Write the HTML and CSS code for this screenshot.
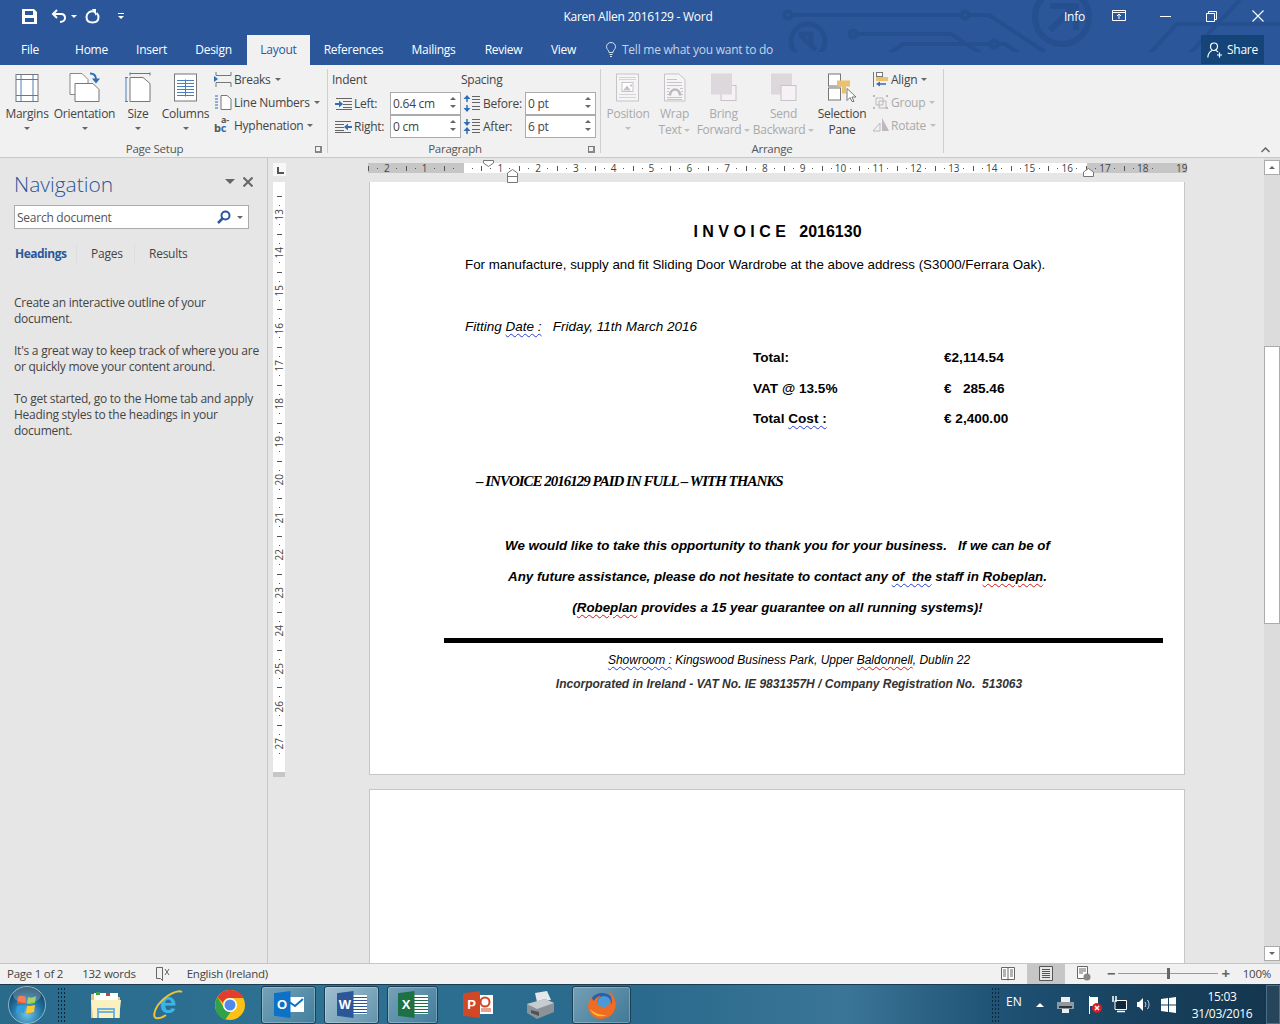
FILE: index.html
```html
<!DOCTYPE html>
<html>
	<head>
		<meta charset="utf-8">
		<title>Karen Allen 2016129 - Word</title>
		<link rel="stylesheet" href="styles.css">
	</head>
	<body>
		<div class="header">
			<svg class="circuit" width="1280" height="52" viewBox="0 0 1280 52">
				<g fill="none" stroke="#254f8e" stroke-width="4">
					<circle cx="788" cy="15" r="3.5"/>
					<path d="M792 15H961M969 15H989L1045 52"/>
					<circle cx="965" cy="15" r="3.5"/>
					<circle cx="853" cy="34" r="3.5"/>
					<path d="M857 34H951L980 53"/>
					<path d="M890 53L903 44H990M998 44H1005L1018 53"/>
					<circle cx="994" cy="44" r="3.5"/>
					<circle cx="808" cy="41" r="17" stroke-width="5"/>
					<path d="M799 34H811V46M800 35L816 50" stroke-width="5"/>
					<circle cx="1062" cy="17" r="27" stroke-width="6"/>
					<path d="M1050 6H1076V30M1074 7L1050 30" stroke-width="6"/>
					<path d="M1150 53L1177 24H1280M1190 53L1240 0"/>
				</g>
			</svg>
			<div class="titlebar">
				<div class="qat">
					<svg class="save-icon" width="15" height="15" viewBox="0 0 15 15"><path fill="#fff" d="M0 0H12L15 3V15H0ZM3 2V6H11V2ZM3 9V13H12V9Z"/></svg>
					<svg width="17" height="14" viewBox="0 0 17 14"><path fill="none" stroke="#fff" stroke-width="2" d="M2 5H10C13 5 14 7 14 9C14 11 12 13 9 13M6 1L2 5L6 9"/></svg>
					<span class="caret caret-white"></span>
					<svg class="redo-icon" width="15" height="15" viewBox="0 0 15 15"><path fill="none" stroke="#fff" stroke-width="2" d="M9 2.500C5 1.800 1.500 4 1.500 8C1.500 11.500 4 13.500 7.500 13.500C11 13.500 13.500 11.500 13.500 8C13.500 6 12.500 5 11.500 4"/><path fill="#fff" d="M7 0H11V7Z"/></svg>
					<span class="customize"><span class="customize-bar"></span><span class="caret caret-white"></span></span>
				</div>
				<div class="doc-title">Karen Allen 2016129 - Word</div>
				<div class="win-btns">
					<span class="info">Info</span>
					<svg class="win-display" width="14" height="12" viewBox="0 0 14 12"><path fill="none" stroke="#fff" d="M.5 .5H13.500V10.500H.5ZM.5 2.500H13.500M7 9V4.500M5 6L7 4L9 6"/></svg>
					<svg class="win-min" width="11" height="11" viewBox="0 0 11 11"><path stroke="#fff" d="M0 5.500H11"/></svg>
					<svg class="win-max" width="11" height="11" viewBox="0 0 11 11"><path fill="none" stroke="#fff" d="M.5 2.500H8.500V10.500H.5ZM2.500 2.500V.5H10.500V8.500H8.500"/></svg>
					<svg class="win-close" width="12" height="12" viewBox="0 0 12 12"><path stroke="#fff" stroke-width="1.100" d="M.5 .5L11.500 11.500M11.500 .5L.5 11.500"/></svg>
				</div>
			</div>
			<div class="tabs">
				<span class="tab tab-file">File</span>
				<span class="tab tab-home">Home</span>
				<span class="tab tab-insert">Insert</span>
				<span class="tab tab-design">Design</span>
				<span class="tab tab-active">Layout</span>
				<span class="tab tab-ref">References</span>
				<span class="tab tab-mail">Mailings</span>
				<span class="tab tab-review">Review</span>
				<span class="tab tab-view">View</span>
				<span class="tell">
					<svg width="10" height="15" viewBox="0 0 10 15"><path fill="none" stroke="#d5dfee" d="M3 10.500C3 8 .5 7.500 .5 4.700C.5 2.300 2.500 .5 5 .5C7.500 .5 9.500 2.300 9.500 4.700C9.500 7.500 7 8 7 10.500ZM3.500 12.500H6.500M4 14.500H6"/></svg>
					Tell me what you want to do
				</span>
				<span class="share">
					<svg width="16" height="16" viewBox="0 0 16 16"><path fill="none" stroke="#fff" stroke-width="1.200" d="M7 1C9.500 1 10.500 3 10.500 4.500C10.500 6.500 9 8.500 7 8.500C5 8.500 3.500 6.500 3.500 4.500C3.500 3 4.500 1 7 1ZM.8 15.500C1 12 3 9.500 5 8.500M9 8.500C10 9 10.500 9.500 11 10M12.500 10.500V15.500M10 13H15"/></svg>
					Share
				</span>
			</div>
		</div>

		<div class="ribbon">
			<div class="group group-setup">
				<div class="group-body">
					<div class="big-btn btn-margins">
						<svg width="32" height="32" viewBox="0 0 32 32"><rect x="5" y="2" width="22" height="27" fill="#fff" stroke="#777"/><path fill="none" stroke="#4a7ebb" d="M5 7H27M5 23H27M10 2V29M22 2V29"/></svg>
						<span class="big-label">Margins</span>
						<span class="caret"></span>
					</div>
					<div class="big-btn btn-orient">
						<svg width="32" height="32" viewBox="0 0 32 32"><path fill="#fff" stroke="#888" d="M1 1H13L19 7V22H1Z"/><path fill="#fff" stroke="#777" d="M6 11H24L30 17V29H6Z"/><path fill="none" stroke="#2f6db5" stroke-width="2" d="M21 1C25 1 27 3 27 7"/><path fill="#2f6db5" d="M23 6H31L27 11Z"/></svg>
						<span class="big-label">Orientation</span>
						<span class="caret"></span>
					</div>
					<div class="big-btn btn-size">
						<svg width="26" height="32" viewBox="0 0 26 32"><path fill="none" stroke="#4a7ebb" d="M5 1H25M5 0V3M25 0V3M1 5V29M0 5H3M0 29H3"/><path fill="#fff" stroke="#777" d="M5 5H18L25 11V29H5Z"/></svg>
						<span class="big-label">Size</span>
						<span class="caret"></span>
					</div>
					<div class="big-btn btn-columns">
						<svg width="24" height="30" viewBox="0 0 24 30"><rect x=".5" y=".5" width="22" height="27" fill="#fff" stroke="#777"/><path stroke="#4a7ebb" d="M3 7H20M3 10H20M3 13H20M3 16H20M3 19H20M3 22H20M11.500 6V23" /></svg>
						<span class="big-label">Columns</span>
						<span class="caret"></span>
					</div>
					<div class="small-col small-setup">
						<div class="small-row">
							<svg width="18" height="15" viewBox="0 0 18 15"><path fill="none" stroke="#777" d="M2 0V3.500H17V0M2 15V10.500H17V15"/><path fill="#2f6db5" d="M0 4L4 7L0 10Z"/></svg>
							<span>Breaks</span><span class="caret"></span>
						</div>
						<div class="small-row">
							<svg width="18" height="15" viewBox="0 0 18 15"><path fill="#fff" stroke="#777" d="M7 .5H13L17 4V14.500H7Z"/><path stroke="#2f6db5" d="M1 1H4M1 4H4M1 7H4M1 10H4M1 13H4"/></svg>
							<span>Line Numbers</span><span class="caret"></span>
						</div>
						<div class="small-row">
							<span class="hyph-icon">b<span class="hyph-blue">c</span><span class="hyph-top">a-</span></span>
							<span>Hyphenation</span><span class="caret"></span>
						</div>
					</div>
				</div>
				<div class="group-label">Page Setup</div>
				<span class="launcher"></span>
			</div>

			<div class="group group-para">
				<div class="group-body para-body">
					<div class="para-col para-indent">
						<div class="para-head">Indent</div>
						<div class="para-row">
							<svg width="17" height="12" viewBox="0 0 17 12"><path stroke="#666" d="M1 .5H17M8 3.500H17M8 6.500H17M8 9.500H17M1 11.500H17"/><path stroke="#2f6db5" stroke-width="2" d="M0 6H4"/><path fill="#2f6db5" d="M4 2.500L8 6L4 9.500Z"/></svg>
							<span class="para-label label-indent">Left:</span>
							<span class="spin">0.64 cm<span class="spin-arrows"><i class="up"></i><i class="down"></i></span></span>
						</div>
						<div class="para-row">
							<svg width="17" height="12" viewBox="0 0 17 12"><path stroke="#666" d="M0 .5H16M0 3.500H9M0 6.500H9M0 9.500H9M0 11.500H16"/><path stroke="#2f6db5" stroke-width="2" d="M13 6H17"/><path fill="#2f6db5" d="M13 2.500L9 6L13 9.500Z"/></svg>
							<span class="para-label label-indent">Right:</span>
							<span class="spin">0 cm<span class="spin-arrows"><i class="up"></i><i class="down"></i></span></span>
						</div>
					</div>
					<div class="para-col para-spacing">
						<div class="para-head">Spacing</div>
						<div class="para-row">
							<svg width="17" height="17" viewBox="0 0 17 17"><path stroke="#666" d="M9 1.500H17M9 4.500H17M9 7.500H17M9 11.500H17M9 14.500H17"/><path stroke="#2f6db5" stroke-width="1.500" d="M4 2V7M4 10V15"/><path fill="#2f6db5" d="M4 0L7.500 4H.5ZM4 17L7.500 13H.5Z"/></svg>
							<span class="para-label label-spacing">Before:</span>
							<span class="spin">0 pt<span class="spin-arrows"><i class="up"></i><i class="down"></i></span></span>
						</div>
						<div class="para-row">
							<svg width="17" height="17" viewBox="0 0 17 17"><path stroke="#666" d="M9 1.500H17M9 4.500H17M9 7.500H17M9 11.500H17M9 14.500H17"/><path stroke="#2f6db5" stroke-width="1.500" d="M4 1V5M4 12V16"/><path fill="#2f6db5" d="M4 8L7.500 4H.5ZM4 9L7.500 13H.5Z"/></svg>
							<span class="para-label label-spacing">After:</span>
							<span class="spin">6 pt<span class="spin-arrows"><i class="up"></i><i class="down"></i></span></span>
						</div>
					</div>
				</div>
				<div class="group-label">Paragraph</div>
				<span class="launcher"></span>
			</div>

			<div class="group group-arrange">
				<div class="group-body">
					<div class="big-btn off btn-position">
						<svg width="24" height="30" viewBox="0 0 24 30"><rect x=".5" y=".5" width="22" height="27" fill="#f5f5f5" stroke="#c8c3c8"/><path stroke="#d6d2d6" d="M3 4H20M3 6H20M3 21H20M3 24H20"/><rect x="6" y="9" width="11" height="9" fill="#fff" stroke="#c8c3c8"/><path fill="#c8c3c8" d="M7 17L11 12L15 17ZM14 11H16V13H14Z"/></svg>
						<span class="big-label">Position</span>
						<span class="caret"></span>
					</div>
					<div class="big-btn off btn-wrap">
						<svg width="22" height="30" viewBox="0 0 22 30"><path fill="#f5f5f5" stroke="#c8c3c8" d="M.5 .5H15L21 6V27.500H.5Z"/><path stroke="#c8c3c8" d="M3 6H13M3 9H18M3 12H18M3 24H18M3 26H18M3 15H6M16 15H19M3 18H5M17 18H19M3 21H5M17 21H19"/><path fill="none" stroke="#bdb8bd" stroke-width="2.500" d="M6 22C6 14 16 14 16 22"/></svg>
						<span class="big-label">Wrap<br>Text <span class="caret"></span></span>
					</div>
					<div class="big-btn off btn-bring">
						<svg width="28" height="30" viewBox="0 0 28 30"><rect x="11" y="12" width="15" height="15" fill="#f5f1f5" stroke="#c8c3c8"/><rect x="1" y="0" width="21" height="21" fill="#dcd8dc"/></svg>
						<span class="big-label">Bring<br>Forward <span class="caret"></span></span>
					</div>
					<div class="big-btn off btn-send">
						<svg width="28" height="30" viewBox="0 0 28 30"><rect x="1" y="0" width="21" height="21" fill="#dcd8dc"/><rect x="11" y="12" width="15" height="15" fill="#f5f1f5" stroke="#c8c3c8"/></svg>
						<span class="big-label">Send<br>Backward <span class="caret"></span></span>
					</div>
					<div class="big-btn btn-selection">
						<svg width="28" height="32" viewBox="0 0 28 32"><rect x=".5" y="1.500" width="12" height="12" fill="#fff" stroke="#777"/><rect x=".5" y="15.500" width="12" height="12" fill="#fff" stroke="#777"/><path fill="#eac16f" d="M9 8H22V14H18V21H14V14H9Z"/><path fill="#fff" stroke="#777" d="M19 16V28L22 25L24 29H26L24 24.500H28Z"/></svg>
						<span class="big-label">Selection<br>Pane</span>
					</div>
					<div class="small-col small-arrange">
						<div class="small-row">
							<svg width="16" height="15" viewBox="0 0 16 15"><path stroke="#777" d="M.5 0V15"/><rect x="3.500" y=".5" width="6" height="4" fill="#fff" stroke="#777"/><rect x="3" y="5" width="12" height="4" fill="#eac16f"/><path stroke="#2f6db5" stroke-width="1.500" d="M6 12H13"/><path fill="#2f6db5" d="M3 12L7 9.500V14.500Z"/></svg>
							<span>Align</span><span class="caret"></span>
						</div>
						<div class="small-row off">
							<svg width="16" height="15" viewBox="0 0 16 15"><path fill="none" stroke="#bcb8bc" d="M3 3H10V10H3ZM6 6H13V13H6Z"/><path fill="#bcb8bc" d="M0 0H2V2H0ZM13 0H15V2H13ZM0 12H2V14H0ZM13 12H15V14H13Z"/></svg>
							<span>Group</span><span class="caret"></span>
						</div>
						<div class="small-row off">
							<svg width="16" height="15" viewBox="0 0 16 15"><path fill="none" stroke="#bcb8bc" d="M0 13H7V5Z"/><path fill="#bcb8bc" d="M9 0L16 13H9Z"/></svg>
							<span>Rotate</span><span class="caret"></span>
						</div>
					</div>
				</div>
				<div class="group-label">Arrange</div>
			</div>
			<svg class="collapse" width="9" height="6" viewBox="0 0 9 6"><path fill="none" stroke="#666" stroke-width="1.500" d="M.5 5L4.500 1L8.500 5"/></svg>
		</div>

		<div class="main">
			<div class="nav">
				<div class="nav-head">
					<span class="nav-title">Navigation</span>
					<span class="caret caret-big"></span>
					<svg class="nav-close" width="10" height="10" viewBox="0 0 10 10"><path stroke="#666" stroke-width="2" d="M.5 .5L9.500 9.500M9.500 .5L.5 9.500"/></svg>
				</div>
				<div class="nav-search">
					<span class="nav-search-text">Search document</span>
					<svg width="14" height="14" viewBox="0 0 14 14"><circle cx="8.500" cy="5.500" r="4" fill="none" stroke="#2b579a" stroke-width="2"/><path stroke="#2b579a" stroke-width="2.500" d="M5.500 8.500L1 13"/></svg>
					<span class="caret"></span>
				</div>
				<div class="nav-tabs">
					<span class="nav-tab nav-tab-on">Headings</span>
					<span class="nav-tab nav-tab-pages">Pages</span>
					<span class="nav-tab nav-tab-results">Results</span>
				</div>
				<p class="nav-text">Create an interactive outline of your document.</p>
				<p class="nav-text">It's a great way to keep track of where you are or quickly move your content around.</p>
				<p class="nav-text">To get started, go to the Home tab and apply Heading styles to the headings in your document.</p>
			</div>

			<div class="work">
				<div class="ruler-top">
					<span class="ruler-corner"><span class="ruler-l"></span></span>
					<div class="h-ruler">
						<span class="cm">2</span><span class="cm">1</span><span class="cm"></span><span class="cm">1</span><span class="cm">2</span><span class="cm">3</span><span class="cm">4</span><span class="cm">5</span><span class="cm">6</span><span class="cm">7</span><span class="cm">8</span><span class="cm">9</span><span class="cm">10</span><span class="cm">11</span><span class="cm">12</span><span class="cm">13</span><span class="cm">14</span><span class="cm">15</span><span class="cm">16</span><span class="cm">17</span><span class="cm">18</span><span class="cm cm-last">19</span>
						<svg class="marker marker-first" width="11" height="7" viewBox="0 0 11 7"><path fill="#fff" stroke="#777" d="M.5 .5H10.500V3L5.500 6.500L.5 3Z"/></svg>
						<svg class="marker marker-left" width="11" height="14" viewBox="0 0 11 14"><path fill="#fff" stroke="#777" d="M.5 13.500V4L5.500 .5L10.500 4V13.500ZM.5 7.500H10.500"/></svg>
						<svg class="marker marker-right" width="11" height="9" viewBox="0 0 11 9"><path fill="#fff" stroke="#777" d="M.5 8.500V4L5.500 .5L10.500 4V8.500Z"/></svg>
					</div>
				</div>
				<div class="work-body">
					<div class="v-ruler">
						<span class="v-start"></span>
						<span class="vcm"><b>13</b></span><span class="vcm"><b>14</b></span><span class="vcm"><b>15</b></span><span class="vcm"><b>16</b></span><span class="vcm"><b>17</b></span><span class="vcm"><b>18</b></span><span class="vcm"><b>19</b></span><span class="vcm"><b>20</b></span><span class="vcm"><b>21</b></span><span class="vcm"><b>22</b></span><span class="vcm"><b>23</b></span><span class="vcm"><b>24</b></span><span class="vcm"><b>25</b></span><span class="vcm"><b>26</b></span><span class="vcm"><b>27</b></span>
						<span class="v-end"></span>
						<span class="v-grey"></span>
					</div>
					<div class="pages">
						<div class="page page-one">
							<div class="line center invoice">I N V O I C E   2016130</div>
							<div class="line for-line">For manufacture, supply and fit Sliding Door Wardrobe at the above address (S3000/Ferrara Oak).</div>
							<div class="line fitting">Fitting <span class="sq-blue">Date :</span>   Friday, 11th March 2016</div>
							<div class="totals">
								<span>Total:</span><span>€2,114.54</span>
								<span>VAT @ 13.5%</span><span>€   285.46</span>
								<span>Total <span class="sq-blue">Cost :</span></span><span>€ 2,400.00</span>
							</div>
							<div class="line paid">– INVOICE 2016129 PAID IN FULL – WITH THANKS</div>
							<div class="thanks">
								<div class="line center">We would like to take this opportunity to thank you for your business.   If we can be of</div>
								<div class="line center">Any future assistance, please do not hesitate to contact any <span class="sq-blue">of  the</span> staff in <span class="sq-red">Robeplan</span>.</div>
								<div class="line center">(<span class="sq-red">Robeplan</span> provides a 15 year guarantee on all running systems)!</div>
							</div>
							<div class="rule"></div>
							<div class="foot foot-one"><span class="sq-blue">Showroom :</span> Kingswood Business Park, Upper <span class="sq-red">Baldonnell</span>, Dublin 22</div>
							<div class="foot foot-two">Incorporated in Ireland - VAT No. IE 9831357H / Company Registration No.  513063</div>
						</div>
						<div class="page page-two"></div>
					</div>
					<div class="scrollbar">
						<span class="scroll-btn"><i class="up"></i></span>
						<span class="scroll-gap-top"></span>
						<span class="scroll-thumb"></span>
						<span class="scroll-gap-bottom"></span>
						<span class="scroll-btn"><i class="down"></i></span>
					</div>
				</div>
			</div>
		</div>

		<div class="status">
			<span class="st-page">Page 1 of 2</span>
			<span class="st-words">132 words</span>
			<svg class="st-proof" width="14" height="15" viewBox="0 0 14 15"><path fill="none" stroke="#666" d="M6.500 1.500H.5V12.500H4.500L6.500 14.500ZM6.500 1.500V14.500"/><path stroke="#666" d="M9 3L13 9M13 3L9 9"/></svg>
			<span class="st-lang">English (Ireland)</span>
			<div class="st-right">
				<svg class="st-view" width="14" height="15" viewBox="0 0 14 15"><path fill="#fff" stroke="#666" d="M.5 1.500H13.500V13.500H.5ZM7 1.500V14.500"/><path stroke="#666" d="M2 4H5M2 6H5M2 8H5M2 10H5M9 4H12M9 6H12M9 8H12M9 10H12"/></svg>
				<span class="st-view-on"><svg width="14" height="15" viewBox="0 0 14 15"><path fill="#e6e6e6" stroke="#555" d="M.5 .5H13.500V14.500H.5Z"/><path stroke="#555" d="M3 3.500H11M3 5.500H11M3 7.500H11M3 9.500H11M3 11.500H11"/></svg></span>
				<svg class="st-web" width="14" height="15" viewBox="0 0 14 15"><path fill="#fff" stroke="#666" d="M.5 .5H10.500V12.500H.5Z"/><path stroke="#666" d="M2 3H9M2 5H9M2 7H6"/><circle cx="10" cy="11" r="3.500" fill="#888"/></svg>
				<span class="zoom">
					<span class="zoom-sign">−</span>
					<span class="zoom-track"><span class="zoom-thumb"></span></span>
					<span class="zoom-sign">+</span>
				</span>
				<span class="st-pct">100%</span>
			</div>
		</div>

		<div class="taskbar">
			<span class="orb-cell">
				<svg width="38" height="38" viewBox="0 0 38 38">
					<defs>
						<radialGradient id="orbFill" cx="50%" cy="75%" r="70%">
							<stop offset="0" stop-color="#6fc3e6"/>
							<stop offset=".6" stop-color="#1f6f9f"/>
							<stop offset="1" stop-color="#12405f"/>
						</radialGradient>
					</defs>
					<circle cx="19" cy="19" r="18.500" fill="url(#orbFill)" stroke="#bcd4e2" stroke-opacity=".7"/>
					<path fill="#f0592b" d="M10 11C13 9 15 10 18 11L17 18C15 17 12 17 9 18Z"/>
					<path fill="#8cc63f" d="M20 11C22 12 25 12 28 10L27 17C24 18 21 18 19 18Z"/>
					<path fill="#2f9fe0" d="M9 20C12 19 14 19 17 20L16 27C14 26 11 26 8 27Z"/>
					<path fill="#fdc82f" d="M19 20C21 20 24 20 27 19L26 26C23 27 20 27 18 27Z"/>
					<ellipse cx="19" cy="9" rx="14" ry="8" fill="#fff" opacity=".22"/>
				</svg>
			</span>
			<span class="grip"></span>
			<span class="task task-first">
				<svg width="32" height="30" viewBox="0 0 32 30"><path fill="#e8c66e" d="M1 4H13L16 7H30V28H1Z"/><path fill="#fff" d="M4 3H28V10H4Z"/><path fill="#3ea33a" d="M6 2H10V5H6Z"/><path fill="#d04030" d="M16 3H20V6H16Z"/><path fill="#fdf0c0" d="M1 10H31L29 28H3Z"/><path fill="none" stroke="#6fb4dc" stroke-width="2" d="M8 28V19H24V28M8 22H24"/></svg>
			</span>
			<span class="task">
				<svg width="32" height="32" viewBox="0 0 32 32"><text x="16" y="24" text-anchor="middle" class="ie-e">e</text><path fill="none" stroke="#f0c22e" stroke-width="2" d="M30 3C26 0 14 6 6 16C2 22 1 28 4 29C7 30 11 28 14 26"/></svg>
			</span>
			<span class="task">
				<svg width="30" height="30" viewBox="0 0 30 30"><circle cx="15" cy="15" r="15" fill="#fbc116"/><path fill="#e23d2e" d="M2.500 7A15 15 0 0 1 28.500 8H15C11 8 9 10 8 13Z"/><path fill="#2fa24a" d="M2.500 7L9 18C10.500 21 13 22 16 21.500L10 30C2 27 -3 16 2.500 7Z"/><circle cx="15" cy="15" r="7" fill="#fff"/><circle cx="15" cy="15" r="5.500" fill="#4f89ee"/></svg>
			</span>
			<span class="task task-on">
				<span class="app-icon">
					<svg class="app-back" width="20" height="19" viewBox="0 0 20 19"><rect width="20" height="15" y="2" fill="#fff"/><path fill="none" stroke="#0d72c6" stroke-width="2" d="M1 4L11 11L19 4"/></svg>
					<span class="app-tile outlook">O</span>
				</span>
			</span>
			<span class="task task-on task-active">
				<span class="app-icon">
					<span class="app-back word-back"></span>
					<span class="app-tile word">W</span>
				</span>
			</span>
			<span class="task task-on task-xl">
				<span class="app-icon">
					<span class="app-back excel-back"></span>
					<span class="app-tile excel">X</span>
				</span>
			</span>
			<span class="task task-ppt">
				<span class="app-icon">
					<svg class="app-back" width="20" height="19" viewBox="0 0 20 19"><rect width="20" height="19" fill="#fff"/><circle cx="12" cy="7" r="4.500" fill="none" stroke="#d24726" stroke-width="2"/><path stroke="#d24726" d="M8 14H18M8 16H18"/></svg>
					<span class="app-tile ppt">P</span>
				</span>
			</span>
			<span class="task task-fax">
				<svg width="30" height="30" viewBox="0 0 30 30"><path fill="#e5e8ea" d="M10 3L22 1L26 10L12 12Z"/><path fill="#8b9398" d="M2 14L20 9L29 13V22L12 29L2 23Z"/><path fill="#c6ccd0" d="M2 14L20 9L29 13L12 19Z"/><path fill="#4d5459" d="M6 20L14 22V26L6 23Z"/></svg>
			</span>
			<span class="task task-on task-fox">
				<svg width="30" height="30" viewBox="0 0 30 30"><circle cx="15" cy="16" r="13" fill="#2a5ea8"/><circle cx="17" cy="13" r="7" fill="#4a9ad8"/><path fill="#ef6c24" d="M22 1C27 5 30 12 28 19C26 26 20 29 14 29C7 29 2 24 1 17C1 13 3 9 5 7C5 9 6 10 7 11C8 8 11 6 14 6C11 8 10 10 10 13C11 16 14 17 17 17C21 17 23 14 22 11C24 12 25 14 25 15C25 10 24 5 22 1Z"/><path fill="#fbc02d" d="M3 19C6 26 14 28 20 25C14 25 8 24 3 19Z"/></svg>
			</span>
			<div class="tray">
				<span class="grip"></span>
				<span class="tray-lang">EN</span>
				<span class="tray-up"></span>
				<svg class="tray-print" width="17" height="16" viewBox="0 0 17 16"><path fill="#eee" d="M4 0H13V5H4ZM5 12H12V16H5Z"/><path fill="#8d9aa3" d="M0 5H17V12H0Z"/><path fill="#333" d="M2 9H15V11H2Z"/></svg>
				<svg class="tray-flag" width="14" height="18" viewBox="0 0 14 18"><path stroke="#fff" d="M1.500 0V18"/><path fill="#fff" d="M2 1H10V10H2Z"/><circle cx="9" cy="12" r="5" fill="#d81e1e"/><path stroke="#fff" stroke-width="1.500" d="M7 10L11 14M11 10L7 14"/></svg>
				<svg class="tray-net" width="15" height="17" viewBox="0 0 15 17"><path fill="#10283a" stroke="#fff" d="M3 4.500H14.500V13.500H3Z"/><path stroke="#fff" stroke-width="1.500" d="M1 0V6M4 0V6M5 15.500H13"/></svg>
				<svg class="tray-vol" width="14" height="15" viewBox="0 0 14 15"><path fill="#fff" d="M0 5H2L6 1V14L2 10H0Z"/><path fill="none" stroke="#cde" d="M8 5C9 6.500 9 8.500 8 10M10.500 3C12.500 6 12.500 9 10.500 12"/></svg>
				<svg class="tray-win" width="15" height="16" viewBox="0 0 15 16"><path fill="#fff" d="M0 2L7 1V7.500H0ZM8 1L15 0V7.500H8ZM0 8.500H7V15L0 14ZM8 8.500H15V16L8 15Z"/></svg>
				<span class="clock">15:03<br>31/03/2016</span>
				<span class="show-desktop"></span>
			</div>
		</div>
	</body>
</html>
```

FILE: styles.css
```css
*{
	box-sizing: border-box;
}
html,body{
	margin: 0;
	height: 100%;
}
body{
	width: 1280px;
	height: 1024px;
	overflow: hidden;
	display: flex;
	flex-direction: column;
	font-family: "Open Sans", sans-serif;
	font-size: 12px;
	letter-spacing: -0.25px;
	color: #444;
	background: #e6e6e6;
}
svg{
	display: block;
	flex: none;
}
.caret{
	display: inline-block;
	width: 0;
	height: 0;
	border-top: 3px solid #666;
	border-left: 3px solid transparent;
	border-right: 3px solid transparent;
	vertical-align: middle;
}
.caret-white{
	border-top-color: #fff;
}

/* title bar + tabs */
.header{
	position: relative;
	height: 65px;
	background: #2b579a;
	color: #fff;
	flex: none;
}
.circuit{
	position: absolute;
	left: 0;
	top: 0;
}
.titlebar{
	position: relative;
	height: 35px;
	padding-bottom: 3px;
	display: flex;
	align-items: center;
}
.qat{
	width: 400px;
	padding-left: 22px;
	display: flex;
	align-items: center;
}
.qat svg{
	margin-right: 3px;
}
.qat .save-icon{
	margin-right: 14px;
}
.qat .redo-icon{
	margin-left: 8px;
}
.customize{
	margin-left: 15px;
	display: flex;
	flex-direction: column;
	align-items: center;
	gap: 2px;
}
.customize-bar{
	width: 6px;
	height: 1px;
	background: #fff;
}
.doc-title{
	width: 476px;
	text-align: center;
}
.win-btns{
	flex: 1;
	display: flex;
	align-items: center;
}
.info{
	margin-left: 188px;
}
.win-display{
	margin-left: 27px;
}
.win-min{
	margin-left: 34px;
}
.win-max{
	margin-left: 35px;
}
.win-close{
	margin-left: 35px;
}
.tabs{
	position: relative;
	height: 30px;
	display: flex;
	align-items: stretch;
}
.tab{
	display: flex;
	align-items: center;
	justify-content: center;
	color: #fff;
	padding-bottom: 1px;
}
.tab-file{
	width: 60px;
}
.tab-home{
	width: 63px;
}
.tab-insert{
	width: 57px;
}
.tab-design{
	width: 67px;
}
.tab-active{
	width: 63px;
	background: #f1f1f1;
	color: #2b579a;
}
.tab-ref{
	width: 87px;
}
.tab-mail{
	width: 73px;
}
.tab-review{
	width: 67px;
}
.tab-view{
	width: 53px;
}
.tell{
	margin-left: 16px;
	padding-bottom: 1px;
	display: flex;
	align-items: center;
	gap: 6px;
	color: #c6d3e8;
}
.share{
	margin-left: auto;
	margin-right: 16px;
	margin-bottom: 1px;
	width: 63px;
	background: #154479;
	display: flex;
	align-items: center;
	justify-content: center;
	gap: 4px;
}

/* ribbon */
.ribbon{
	position: relative;
	height: 93px;
	flex: none;
	background: #f1f1f1;
	border-bottom: 1px solid #c8c8c8;
	display: flex;
	padding-top: 4px;
}
.group{
	position: relative;
	height: 84px;
	flex: none;
	border-right: 1px solid #cfcfcf;
	display: flex;
	flex-direction: column;
}
.group-setup{
	width: 328px;
}
.group-para{
	width: 273px;
}
.group-arrange{
	width: 343px;
}
.group-setup .group-label,.group-para .group-label{
	padding-right: 18px;
}
.group-body{
	height: 75px;
	flex: none;
	display: flex;
}
.group-label{
	height: 9px;
	line-height: 9px;
	text-align: center;
	font-size: 11.500px;
	color: #555;
}
.launcher{
	position: absolute;
	right: 5px;
	bottom: 0;
	width: 7px;
	height: 7px;
	border-left: 1px solid #777;
	border-top: 1px solid #777;
	border-bottom: 2px solid #888;
	border-right: 2px solid #888;
}
.big-btn{
	flex: none;
	display: flex;
	flex-direction: column;
	align-items: center;
	text-align: center;
	color: #444;
}
.big-btn svg{
	height: 33px;
	margin-top: 3px;
}
.big-label{
	display: block;
	margin-top: 1px;
	line-height: 16px;
	white-space: nowrap;
}
.big-btn > .caret{
	margin-top: 5px;
}
.big-label .caret{
	border-top-color: #bbb;
}
.off,.off .big-label{
	color: #a9a9a9;
}
.off > .caret,.off .caret{
	border-top-color: #c0c0c0;
}
.btn-margins{
	width: 54px;
}
.btn-orient{
	width: 61px;
}
.btn-size{
	width: 46px;
}
.btn-columns{
	width: 49px;
}
.small-col{
	flex: none;
	display: flex;
	flex-direction: column;
}
.small-setup{
	margin-left: 4px;
}
.small-row{
	height: 23px;
	padding-bottom: 2px;
	display: flex;
	align-items: center;
	gap: 2px;
	white-space: nowrap;
}
.small-row .caret{
	margin-left: 2px;
}
.hyph-icon{
	position: relative;
	width: 18px;
	font-weight: 700;
	font-size: 11px;
	line-height: 14px;
	padding-top: 4px;
	color: #555;
}
.hyph-blue{
	color: #2f6db5;
}
.hyph-top{
	position: absolute;
	left: 7px;
	top: -4px;
	font-size: 9px;
}

/* paragraph group */
.para-indent{
	width: 133px;
	padding-left: 4px;
}
.para-spacing{
	width: 136px;
}
.para-head{
	height: 23px;
	line-height: 21px;
}
.para-row{
	height: 23px;
	display: flex;
	align-items: center;
}
.para-indent svg{
	margin-left: 3px;
}
.para-spacing svg{
	margin-left: 2px;
}
.para-label{
	white-space: nowrap;
}
.label-indent{
	width: 38px;
	padding-left: 2px;
}
.label-spacing{
	width: 45px;
	padding-left: 3px;
}
.spin{
	position: relative;
	width: 71px;
	height: 23px;
	line-height: 21px;
	padding-left: 2px;
	background: #fff;
	border: 1px solid #ababab;
	color: #444;
}
.spin-arrows{
	position: absolute;
	right: 4px;
	top: 4px;
	display: flex;
	flex-direction: column;
	gap: 5px;
}
.up,.down{
	display: block;
	width: 0;
	height: 0;
	border-left: 3px solid transparent;
	border-right: 3px solid transparent;
}
.up{
	border-bottom: 3px solid #666;
}
.down{
	border-top: 3px solid #666;
}
.btn-position{
	width: 50px;
	margin-left: 2px;
}
.btn-wrap{
	width: 43px;
}
.btn-bring{
	width: 55px;
}
.btn-send{
	width: 65px;
}
.btn-selection{
	width: 52px;
}
.small-arrange{
	margin-left: 5px;
}
.collapse{
	position: absolute;
	right: 10px;
	bottom: 4px;
}

/* main area */
.main{
	height: 805px;
	flex: none;
	display: flex;
}
.nav{
	width: 268px;
	flex: none;
	border-right: 1px solid #c6c6c6;
	background: #e6e6e6;
	padding: 0 14px;
}
.nav-head{
	height: 47px;
	display: flex;
	align-items: center;
}
.nav-title{
	width: 214px;
	font-size: 21px;
	font-weight: 300;
	letter-spacing: 0;
	color: #2b579a;
	padding-top: 4px;
}
.caret-big{
	border-top-width: 5px;
	border-left-width: 5px;
	border-right-width: 5px;
}
.nav-close{
	margin-left: 8px;
}
.nav-search{
	width: 235px;
	height: 24px;
	background: #fff;
	border: 1px solid #ababab;
	display: flex;
	align-items: center;
	padding: 0 5px 0 2px;
	color: #555;
}
.nav-search-text{
	flex: 1;
}
.nav-search .caret{
	margin-left: 6px;
}
.nav-tabs{
	height: 22px;
	margin-top: 14px;
	display: flex;
	align-items: center;
}
.nav-tab{
	height: 20px;
	line-height: 20px;
}
.nav-tab-on{
	width: 63px;
	padding-left: 1px;
	font-weight: 700;
	color: #2b579a;
	letter-spacing: -0.5px;
	border-right: 1px solid #dedede;
}
.nav-tab-pages{
	width: 58px;
	padding-left: 14px;
	border-right: 1px solid #dedede;
}
.nav-tab-results{
	padding-left: 14px;
}
.nav-text{
	margin: 0 0 16px;
	width: 252px;
	line-height: 16px;
	color: #444;
}
.nav-tabs + .nav-text{
	margin-top: 30px;
}
.work{
	flex: 1;
	display: flex;
	flex-direction: column;
	min-width: 0;
}
.ruler-top{
	height: 24px;
	flex: none;
	display: flex;
	padding-top: 5px;
}
.ruler-corner{
	width: 100px;
	padding-left: 5px;
}
.ruler-l{
	display: block;
	width: 13px;
	height: 13px;
	background: #f7f7f7;
	position: relative;
}
.ruler-l:after{
	content: "";
	position: absolute;
	left: 4px;
	top: 4px;
	width: 5px;
	height: 5px;
	border-left: 2px solid #555;
	border-bottom: 2px solid #555;
}
.h-ruler{
	position: relative;
	width: 819px;
	height: 10px;
	display: flex;
	background: linear-gradient(90deg,#c6c6c6 96px,#fff 96px,#fff 719px,#c6c6c6 719px);
}
.cm{
	width: 37.800px;
	flex: none;
	text-align: center;
	font-size: 10px;
	line-height: 10px;
	letter-spacing: 0;
	color: #444;
	background:
		linear-gradient(#555,#555) 0 50%/1px 5px no-repeat,
		linear-gradient(#555,#555) 9px 50%/1px 1px no-repeat,
		linear-gradient(#555,#555) 28px 50%/1px 1px no-repeat;
}
.cm-last{
	width: 20px;
	background: none;
	margin-left: 10px;
}
.marker{
	position: absolute;
}
.marker-first{
	left: 115px;
	top: -3px;
}
.marker-left{
	left: 139px;
	top: 6px;
}
.marker-right{
	left: 715px;
	top: 5px;
}
.work-body{
	flex: 1;
	min-height: 0;
	display: flex;
}
.v-ruler{
	width: 12px;
	margin-left: 5px;
	height: 595px;
	flex: none;
	background: #fff;
	display: flex;
	flex-direction: column;
}
.v-start{
	height: 14px;
	flex: none;
}
.vcm{
	height: 37.800px;
	flex: none;
	display: flex;
	align-items: center;
	justify-content: center;
	background:
		linear-gradient(#555,#555) 50% 0/5px 1px no-repeat,
		linear-gradient(#555,#555) 50% 9px/1px 1px no-repeat,
		linear-gradient(#555,#555) 50% 28px/1px 1px no-repeat;
}
.vcm b{
	font-weight: 400;
	font-size: 10px;
	line-height: 12px;
	letter-spacing: 0;
	color: #444;
	writing-mode: vertical-rl;
	transform: rotate(180deg);
}
.v-end{
	flex: 1;
}
.v-grey{
	height: 5px;
	flex: none;
	background: #c6c6c6;
}
.pages{
	width: 816px;
	margin-left: 84px;
	flex: none;
	overflow: hidden;
}
.page{
	background: #fff;
	border: 1px solid #c6c6c6;
	color: #000;
	font-family: "Liberation Sans", Arial, sans-serif;
	font-size: 13.330px;
	letter-spacing: 0;
}
.page-one{
	display: flow-root;
	height: 593px;
	border-top: none;
	padding-left: 95px;
	margin-bottom: 14px;
}
.page-two{
	height: 300px;
}
.line{
	height: 31px;
	line-height: 31px;
	white-space: pre;
}
.center{
	width: 625px;
	text-align: center;
}
.invoice{
	margin-top: 34px;
	font-weight: 700;
	font-size: 16px;
}
.for-line{
	margin-top: 2px;
}
.fitting{
	margin-top: 31px;
	font-style: italic;
	font-size: 13.500px;
}
.totals{
	margin-top: 1px;
	margin-left: 288px;
	display: grid;
	grid-template-columns: 191px auto;
	grid-auto-rows: 30.700px;
	line-height: 30.700px;
	font-weight: 700;
	font-size: 13.600px;
	white-space: pre;
}
.paid{
	margin-top: 31px;
	padding-left: 11px;
	font-family: "Liberation Serif", serif;
	font-size: 15px;
	font-weight: 700;
	font-style: italic;
	letter-spacing: -1px;
}
.thanks{
	margin-top: 33px;
	font-weight: 700;
	font-style: italic;
}
.sq-blue{
	text-decoration: underline wavy #2a3fd0 1px;
	text-underline-offset: 2px;
}
.sq-red{
	text-decoration: underline wavy #d01818 1px;
	text-underline-offset: 2px;
}
.rule{
	width: 719px;
	height: 5px;
	margin: 15px 0 0 -21px;
	background: #000;
}
.foot{
	width: 690px;
	margin-left: -21px;
	height: 24px;
	line-height: 24px;
	text-align: center;
	font-size: 12px;
	font-style: italic;
	white-space: pre;
}
.foot-one{
	margin-top: 5px;
}
.foot-two{
	font-weight: 700;
	color: #333;
}
.scrollbar{
	width: 16px;
	margin-left: 79px;
	margin-top: -24px;
	flex: none;
	display: flex;
	flex-direction: column;
	background: #dcdcdc;
	height: 805px;
	padding-top: 2px;
}
.scroll-btn{
	height: 15px;
	flex: none;
	background: #fff;
	border: 1px solid #ababab;
	display: flex;
	align-items: center;
	justify-content: center;
}
.scroll-gap-top{
	height: 171px;
	flex: none;
}
.scroll-gap-bottom{
	height: 322px;
	flex: none;
}
.scroll-thumb{
	height: 278px;
	flex: none;
	background: #fff;
	border: 1px solid #ababab;
}

/* status bar */
.status{
	height: 21px;
	flex: none;
	background: #f1f1f1;
	border-top: 1px solid #c6c6c6;
	display: flex;
	align-items: center;
	font-size: 11.500px;
	color: #444;
	padding: 0 0 2px 7px;
}
.st-words{
	margin-left: 19px;
}
.st-proof{
	margin-left: 20px;
}
.st-lang{
	margin-left: 17px;
}
.st-right{
	margin-left: auto;
	height: 100%;
	display: flex;
	align-items: center;
}
.st-view-on{
	width: 38px;
	height: 21px;
	margin-left: 12px;
	background: #c6c6c6;
	display: flex;
	align-items: center;
	justify-content: center;
}
.st-web{
	margin-left: 12px;
}
.zoom{
	margin-left: 16px;
	display: flex;
	align-items: center;
	gap: 3px;
}
.zoom-sign{
	font-size: 15px;
	font-weight: 700;
	color: #666;
	line-height: 14px;
}
.zoom-track{
	position: relative;
	width: 100px;
	height: 1px;
	background: #999;
}
.zoom-thumb{
	position: absolute;
	left: 49px;
	top: -5px;
	width: 3px;
	height: 11px;
	background: #666;
}
.st-pct{
	margin-left: 13px;
	margin-right: 9px;
}

/* taskbar */
.taskbar{
	height: 40px;
	flex: none;
	display: flex;
	align-items: center;
	border-top: 1px solid #1b3b50;
	color: #fff;
	background: linear-gradient(90deg,#2a6b8c 0,#2d7193 25%,#2a6a8c 50%,#3a7597 66%,#1f5275 78%,#17405c 90%,#14354d 100%);
}
.orb-cell{
	width: 57px;
	padding-left: 8px;
	flex: none;
}
.grip{
	width: 8px;
	height: 36px;
	flex: none;
	background-image: radial-gradient(#0e2535 45%,transparent 50%);
	background-size: 3px 4px;
}
.task{
	width: 62px;
	height: 38px;
	flex: none;
	display: flex;
	align-items: center;
	justify-content: center;
}
.task-first{
	margin-left: 10px;
}
.task-on{
	width: 55px;
	margin-right: 8px;
	border: 1px solid #1a3f57;
	border-radius: 3px;
	box-shadow: inset 0 0 0 1px rgba(255,255,255,.25);
	background: linear-gradient(135deg,rgba(255,255,255,.35),rgba(255,255,255,.1));
}
.task-active{
	background: linear-gradient(135deg,rgba(255,255,255,.55),rgba(255,255,255,.25));
}
.task-xl{
	width: 51px;
}
.task-ppt{
	width: 64px;
}
.task-fax{
	width: 60px;
}
.task-fox{
	width: 59px;
	margin-left: 2px;
	margin-right: 0;
}
.app-icon{
	position: relative;
	width: 30px;
	height: 27px;
	display: block;
}
.app-back{
	position: absolute;
	right: 0;
	top: 4px;
	width: 20px;
	height: 19px;
}
.word-back{
	background: repeating-linear-gradient(180deg,#fff 0,#fff 2px,#2b579a 2px,#2b579a 3px);
}
.excel-back{
	background: repeating-linear-gradient(180deg,#fff 0,#fff 2px,#1e7145 2px,#1e7145 3px);
}
.app-tile{
	position: absolute;
	left: 0;
	top: 0;
	width: 17px;
	height: 27px;
	display: flex;
	align-items: center;
	justify-content: center;
	font-family: "Liberation Sans", sans-serif;
	font-weight: 700;
	font-size: 13px;
	letter-spacing: 0;
	color: #fff;
	clip-path: polygon(0 8%,100% 0,100% 100%,0 92%);
}
.outlook{
	background: #0d72c6;
}
.word{
	background: #2b579a;
}
.excel{
	background: #1e7145;
}
.ppt{
	background: #d24726;
}
.ie-e{
	font-family: "Liberation Sans", sans-serif;
	font-size: 30px;
	font-weight: 700;
	fill: #3ab4e6;
}
.tray{
	margin-left: auto;
	display: flex;
	align-items: center;
	height: 100%;
}
.tray-lang{
	width: 26px;
	margin-left: 7px;
	margin-top: -6px;
	letter-spacing: 0;
}
.tray-up{
	margin-left: 4px;
	width: 0;
	height: 0;
	border-left: 4px solid transparent;
	border-right: 4px solid transparent;
	border-bottom: 4px solid #fff;
}
.tray-print{
	margin-left: 13px;
}
.tray-flag{
	margin-left: 14px;
}
.tray-net{
	margin-left: 10px;
}
.tray-vol{
	margin-left: 10px;
}
.tray-win{
	margin-left: 10px;
}
.clock{
	width: 70px;
	margin-left: 11px;
	text-align: center;
	line-height: 17px;
	letter-spacing: -0.3px;
}
.show-desktop{
	width: 14px;
	height: 100%;
	margin-left: 9px;
	border: 1px solid #4b6f86;
	background: rgba(255,255,255,.08);
}
```
